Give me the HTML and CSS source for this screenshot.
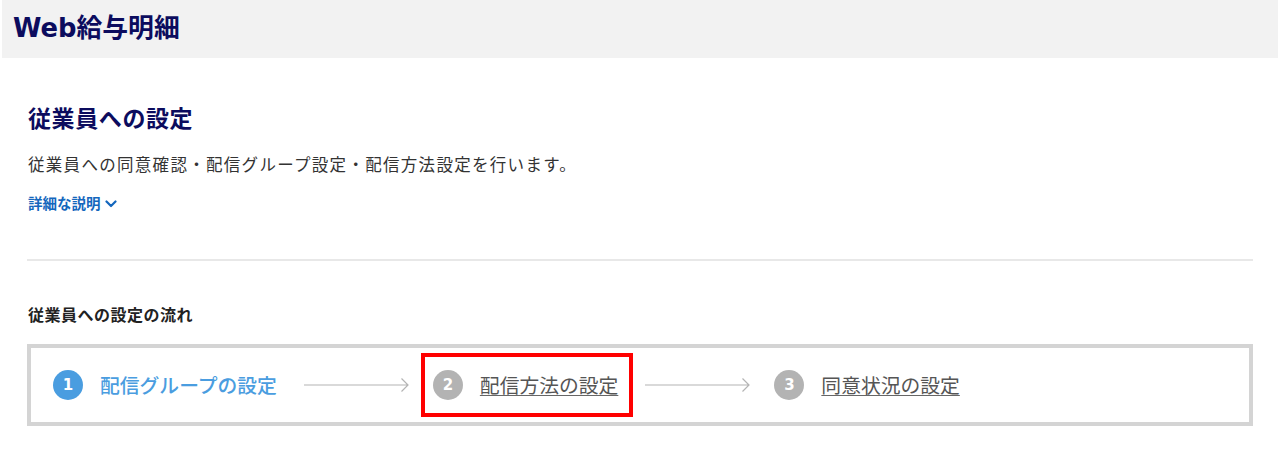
FILE: index.html
```html
<!DOCTYPE html>
<html lang="ja">
<head>
<meta charset="utf-8">
<title>Web給与明細</title>
<link rel="stylesheet" href="styles.css">
</head>
<body>
<header class="app-header">
  <h1 class="app-title">Web給与明細</h1>
</header>
<main class="content">
  <h2 class="page-title">従業員への設定</h2>
  <p class="page-desc">従業員への同意確認・配信グループ設定・配信方法設定を行います。</p>
  <a class="detail-link" href="#">詳細な説明<svg class="chev" width="12" height="8" viewBox="0 0 12 8"><path d="M1.5 1.5 L6 6 L10.5 1.5" fill="none" stroke="currentColor" stroke-width="2.2" stroke-linecap="round" stroke-linejoin="round"/></svg></a>
  <hr class="sep">
  <h3 class="flow-title">従業員への設定の流れ</h3>
  <div class="flow-box">
    <div class="step step-active">
      <span class="num">1</span>
      <span class="label">配信グループの設定</span>
    </div>
    <svg class="arrow" width="106" height="16" viewBox="0 0 106 16"><path d="M0 8 H104 M97.5 1.5 L104 8 L97.5 14.5" fill="none" stroke="#b4b4b4" stroke-width="1.2"/></svg>
    <div class="step step-highlight">
      <span class="num">2</span>
      <a class="label" href="#">配信方法の設定</a>
      <span class="mark"></span>
    </div>
    <svg class="arrow" width="106" height="16" viewBox="0 0 106 16"><path d="M0 8 H104 M97.5 1.5 L104 8 L97.5 14.5" fill="none" stroke="#b4b4b4" stroke-width="1.2"/></svg>
    <div class="step">
      <span class="num">3</span>
      <a class="label" href="#">同意状況の設定</a>
    </div>
  </div>
</main>
</body>
</html>
```

FILE: styles.css
```css
* { box-sizing: border-box; }

body {
  margin: 0;
  background: #ffffff;
  font-family: "Noto Sans CJK JP", "DejaVu Sans", sans-serif;
  color: #333333;
}

.app-header {
  margin: 0 2px;
  height: 58px;
  background: #f2f2f2;
  display: flex;
  align-items: center;
  padding: 0 0 3px 11px;
}

.app-title {
  margin: 0;
  font-family: "DejaVu Sans", "Noto Sans CJK JP", sans-serif;
  font-size: 25.8px;
  font-weight: 700;
  line-height: 32px;
  color: #0c0c5e;
}

.content {
  padding: 0 27px;
}

.page-title {
  margin: 43px 0 0 1px;
  font-size: 23px;
  letter-spacing: 0.6px;
  font-weight: 700;
  line-height: 32px;
  color: #0c0c5e;
}

.page-desc {
  margin: 18px 0 0 1px;
  font-size: 16.5px;
  letter-spacing: 1.3px;
  line-height: 26px;
  color: #333333;
}

.detail-link {
  display: inline-flex;
  align-items: center;
  gap: 4px;
  margin: 16px 0 0 1px;
  font-size: 14.5px;
  font-weight: 700;
  line-height: 20px;
  color: #1467bd;
  text-decoration: none;
}

.chev { display: block; margin-top: 1px; }

.sep {
  margin: 45px 0 0 0;
  border: 0;
  height: 2px;
  background: #e8e8e8;
}

.flow-title {
  margin: 41px 0 0 1px;
  font-size: 16px;
  letter-spacing: 0.5px;
  font-weight: 700;
  line-height: 24px;
  color: #222222;
}

.flow-box {
  margin-top: 18px;
  height: 82px;
  border: 4px solid #d4d4d4;
  display: flex;
  align-items: center;
  padding-left: 22px;
}

.step {
  display: flex;
  align-items: center;
  gap: 17px;
  height: 30px;
}

.step-highlight { position: relative; }

.num {
  width: 30px;
  height: 30px;
  border-radius: 50%;
  background: #b3b3b3;
  color: #ffffff;
  font-family: "DejaVu Sans", sans-serif;
  font-weight: 700;
  font-size: 15px;
  display: flex;
  align-items: center;
  justify-content: center;
}

.label {
  font-size: 19.8px;
  line-height: 28px;
  color: #555555;
  text-decoration: underline;
  text-decoration-color: #666666;
  text-underline-offset: 2px;
}

.step-active .num { background: #4a9de0; }
.step-active .label {
  color: #4a9de0;
  font-weight: 500;
  text-decoration: none;
}

.arrow {
  display: block;
  margin: 0 23px 0 27px;
}

.mark {
  position: absolute;
  left: -12px;
  right: -15px;
  top: -17px;
  bottom: -17px;
  border: 4px solid #ff0000;
  pointer-events: none;
}
```
